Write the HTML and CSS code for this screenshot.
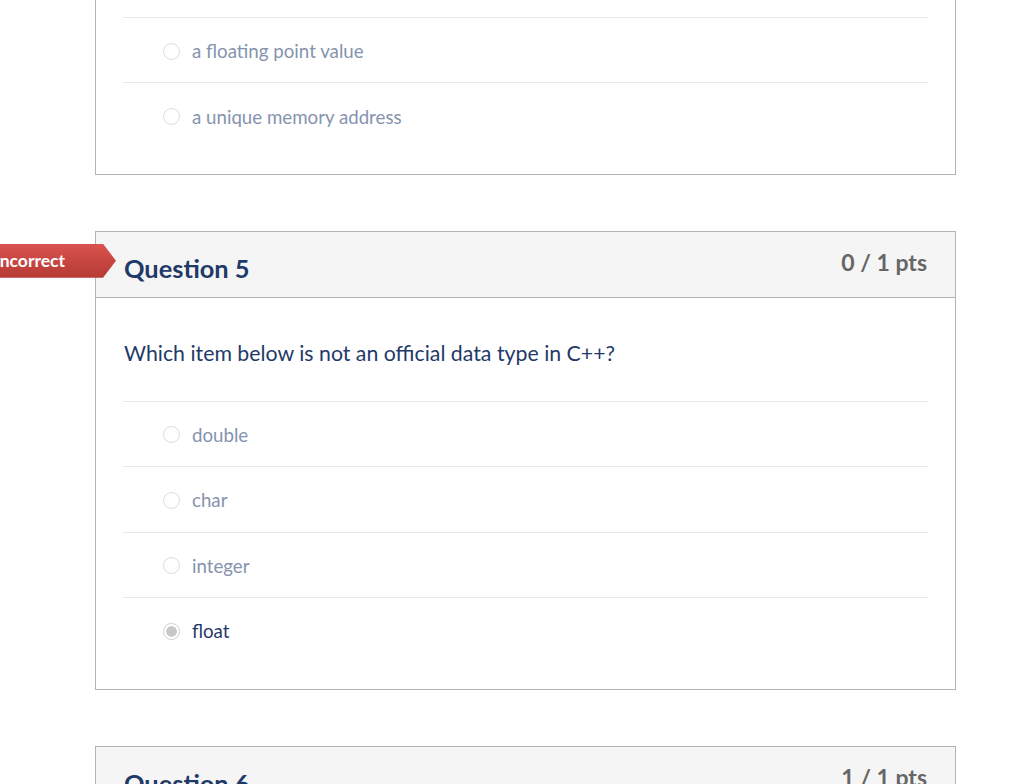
FILE: index.html
```html
<!DOCTYPE html>
<html>
<head>
<meta charset="utf-8">
<link rel="stylesheet" href="styles.css">
</head>
<body>
<div class="page">
  <div class="card card-cut">
    <div class="body body-cut">
      <ul class="answers">
        <li class="answer"><span class="radio"></span><span class="label">a floating point value</span></li>
        <li class="answer"><span class="radio"></span><span class="label">a unique memory address</span></li>
      </ul>
    </div>
  </div>

  <div class="card">
    <div class="badge"><span>Incorrect</span></div>
    <div class="header">
      <h2 class="title">Question 5</h2>
      <div class="pts">0 / 1 pts</div>
    </div>
    <div class="body">
      <p class="question">Which item below is not an official data type in C++?</p>
      <ul class="answers">
        <li class="answer"><span class="radio"></span><span class="label">double</span></li>
        <li class="answer"><span class="radio"></span><span class="label">char</span></li>
        <li class="answer"><span class="radio"></span><span class="label">integer</span></li>
        <li class="answer selected"><span class="radio"></span><span class="label">float</span></li>
      </ul>
    </div>
  </div>

  <div class="card">
    <div class="header">
      <h2 class="title">Question 6</h2>
      <div class="pts">1 / 1 pts</div>
    </div>
  </div>
</div>
</body>
</html>
```

FILE: styles.css
```css
html, body {
  margin: 0;
  padding: 0;
  background: #fff;
  overflow: hidden;
}
body {
  font-family: Lato, "Open Sans", sans-serif;
  height: 784px;
}
.page {
  padding-left: 95px;
  width: 861px;
  display: flex;
  flex-direction: column;
  gap: 56px;
}
.card {
  position: relative;
  border: 1px solid #b3b3b3;
  background: #fff;
}
.card-cut {
  border-top: none;
}
.header {
  background: #f5f5f5;
  border-bottom: 1px solid #b3b3b3;
  height: 65px;
  padding: 0 28px 0 28px;
  display: flex;
  justify-content: space-between;
  align-items: flex-start;
}
.title {
  margin: 21px 0 0;
  font-size: 25.4px;
  line-height: 30px;
  font-weight: 700;
  color: #1f3a68;
}
.pts {
  margin-top: 17px;
  font-size: 23px;
  line-height: 26px;
  font-weight: 700;
  color: #666;
}
.badge {
  position: absolute;
  left: -96px;
  top: 12px;
  width: 116px;
  height: 34px;
  box-sizing: border-box;
  padding-right: 51px;
  display: flex;
  justify-content: flex-end;
  align-items: center;
  color: #fff;
  font-size: 17.5px;
  font-weight: 700;
  line-height: 34px;
  white-space: nowrap;
  background: linear-gradient(#d9534f, #b63a34);
  clip-path: polygon(0 0, 103px 0, 116px 50%, 103px 100%, 0 100%);
}
.badge span {
  flex: none;
}
.body {
  padding: 40px 27px 27px 27px;
}
.body-cut {
  padding-top: 17px;
  padding-bottom: 26px;
}
.question {
  margin: 0 0 33px;
  padding-left: 1px;
  font-size: 21.3px;
  line-height: 30px;
  color: #1f3a68;
}
.answers {
  list-style: none;
  margin: 0;
  padding: 0;
}
.answer {
  border-top: 1px solid #e8e8e8;
  box-sizing: border-box;
  height: 65.4px;
  padding-top: 2px;
  display: flex;
  align-items: center;
  padding-left: 40px;
  gap: 12px;
}
.radio {
  width: 17px;
  height: 17px;
  border: 1px solid #dcdcdc;
  border-radius: 50%;
  box-sizing: border-box;
  background: #fff;
  flex: none;
}
.selected .radio {
  border: 1px solid #cfcfcf;
  background: radial-gradient(circle, #c8c8c8 0 5px, #fff 5.5px);
}
.label {
  font-size: 18.7px;
  color: #8593ae;
}
.selected .label {
  color: #1f3a68;
}
```
